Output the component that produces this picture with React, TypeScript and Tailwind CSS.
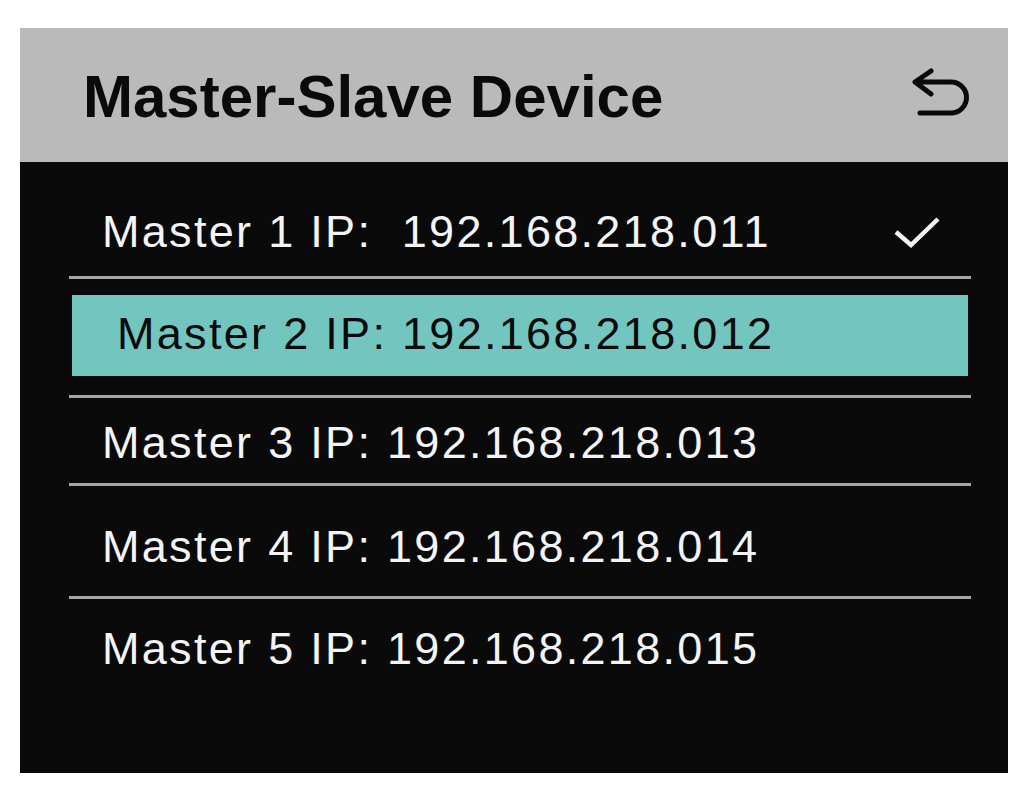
import React from "react";

const font = { fontFamily: '"Liberation Sans", Arial, Helvetica, sans-serif' };

const Divider = () => <div className="h-[3px] w-full bg-[#a6a6a6]" />;

const BackIcon = () => (
  <svg width="60" height="56" viewBox="0 0 60 56" fill="none">
    <path
      d="M19 5 L3 16 L19 28 M3 16 H39 A15.5 15.5 0 0 1 39 47 H8"
      stroke="#0a0a0a"
      strokeWidth="5"
      strokeLinecap="round"
      strokeLinejoin="round"
    />
  </svg>
);

const CheckIcon = () => (
  <svg width="48" height="32" viewBox="0 0 48 32" fill="none">
    <path d="M3 16 L18 29 L45 3" stroke="#f2f2f2" strokeWidth="4.5" />
  </svg>
);

export default function App() {
  return (
    <div className="min-h-screen bg-white pt-[28px] pl-[20px]" style={font}>
      <div className="flex h-[745px] w-[988px] flex-col bg-[#0a0a0a]">
        {/* header */}
        <div className="flex h-[134px] shrink-0 items-start justify-between bg-[#bababa] pl-[63px] pr-[36px] pt-[39px]">
          <h1 className="text-[60px] font-bold leading-none text-[#0a0a0a]">Master-Slave Device</h1>
          <div className="-mt-[1px]">
            <BackIcon />
          </div>
        </div>

        {/* list */}
        <div className="ml-[49px] flex w-[902px] flex-col text-[45px] leading-none tracking-[2.3px] text-[#f4f4f4]">
          <div className="flex h-[114px] items-start justify-between pl-[33px] pr-[30px] pt-[47px]">
            <span className="whitespace-pre">Master 1 IP:  192.168.218.011</span>
            <div className="pt-[7px]">
              <CheckIcon />
            </div>
          </div>
          <Divider />
          <div className="flex h-[116px] flex-col pt-[16px]">
            <div className="mx-[3px] h-[81px] bg-[#72c6bf] pl-[45px] pt-[16px] text-[#0a0a0a]">
              Master 2 IP: 192.168.218.012
            </div>
          </div>
          <Divider />
          <div className="h-[85px] pl-[33px] pt-[22px]">Master 3 IP: 192.168.218.013</div>
          <Divider />
          <div className="h-[110px] pl-[33px] pt-[38px]">Master 4 IP: 192.168.218.014</div>
          <Divider />
          <div className="pl-[33px] pt-[27px]">Master 5 IP: 192.168.218.015</div>
        </div>
      </div>
    </div>
  );
}
